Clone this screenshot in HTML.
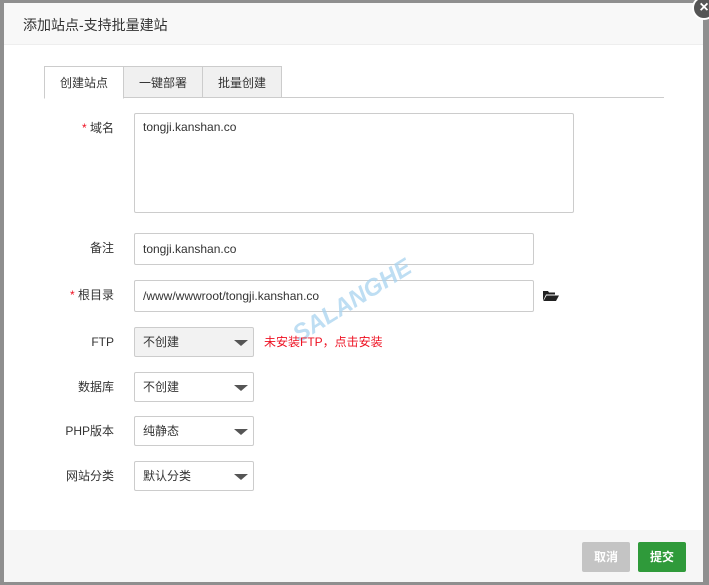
<!DOCTYPE html>
<html><head><meta charset="utf-8"><style>
*{box-sizing:border-box;margin:0;padding:0}
body{width:709px;height:585px;background:#8f8f8f;font-family:"Liberation Sans","Noto Sans CJK SC",sans-serif;position:relative;overflow:hidden;font-size:12px;color:#333}
.dlg{position:absolute;left:4px;top:3px;width:699px;height:579px;background:#fff}
.hd{height:42px;background:#f8f8f8;border-bottom:1px solid #eee;padding-left:19px;line-height:44px;font-size:14px;color:#333}
.close{position:absolute;left:688px;top:-7px;width:24px;height:24px;border-radius:50%;background:#555;border:2px solid #fff;color:#fff;font-size:16px;font-weight:bold;text-align:center;line-height:19px}
.tabs{position:absolute;left:40px;top:63px;width:620px;height:32px;border-bottom:1px solid #ccc}
.tab{position:absolute;top:0;height:32px;line-height:32px;text-align:center;font-size:12px;background:#f0f0f0;border:1px solid #ccc}
.tab.a{background:#fff;border-bottom:1px solid #fff;height:33px}
.lbl{position:absolute;width:110px;text-align:right;font-size:12px}
.red{color:#e12}
.in{position:absolute;border:1px solid #ccc;border-radius:2px;background:#fff;padding-left:8px;font-size:12px}
.sel{position:absolute;left:130px;width:120px;height:30px;border:1px solid #ccc;border-radius:2px;line-height:28px;padding-left:8px;background:#fff}
.sel:after{content:"";position:absolute;right:5px;top:12px;border-left:7px solid transparent;border-right:7px solid transparent;border-top:6px solid #555}
.ft{position:absolute;left:0;top:527px;width:699px;height:52px;background:#f6f6f6}
.btn{position:absolute;top:539px;height:30px;width:48px;color:#fff;font-weight:bold;text-align:center;line-height:30px;border-radius:2px;font-size:12px}
</style></head><body>
<div class="dlg">
<div class="hd">添加站点-支持批量建站</div>
<div class="tabs">
<div class="tab a" style="left:0;width:80px">创建站点</div>
<div class="tab" style="left:79px;width:80px">一键部署</div>
<div class="tab" style="left:158px;width:80px">批量创建</div>
</div>
<div class="lbl" style="top:116px"><span class="red">*</span> 域名</div>
<div class="in" style="left:130px;top:110px;width:440px;height:100px;padding-top:6px">tongji.kanshan.co</div>
<div class="lbl" style="top:236px">备注</div>
<div class="in" style="left:130px;top:230px;width:400px;height:32px;line-height:30px">tongji.kanshan.co</div>
<div class="lbl" style="top:283px"><span class="red">*</span> 根目录</div>
<div class="in" style="left:130px;top:277px;width:400px;height:32px;line-height:30px">/www/wwwroot/tongji.kanshan.co</div>
<svg style="position:absolute;left:539px;top:287px" width="16" height="12" viewBox="0 0 16 12"><path d="M0 1h5l1 1.5h6v2H3L0 11z" fill="#222"/><path d="M3.5 5.5H16L13 11H0.5z" fill="#222"/></svg>
<div style="position:absolute;left:284px;top:322px;transform:rotate(-32deg);transform-origin:left top;font-size:24px;font-weight:bold;font-style:italic;color:#a9d3ef;opacity:.75">SALANGHE</div>
<div class="lbl" style="top:332px">FTP</div>
<div class="sel" style="top:324px;background:#f2f2f2">不创建</div>
<div class="red" style="position:absolute;left:260px;top:330px">未安装FTP，点击安装</div>
<div class="lbl" style="top:375px">数据库</div>
<div class="sel" style="top:369px">不创建</div>
<div class="lbl" style="top:419px">PHP版本</div>
<div class="sel" style="top:413px">纯静态</div>
<div class="lbl" style="top:464px">网站分类</div>
<div class="sel" style="top:458px">默认分类</div>
<div class="ft"></div>
<div class="btn" style="left:578px;background:#c4c4c4">取消</div>
<div class="btn" style="left:634px;background:#2f9a3a">提交</div>
<div class="close">×</div>
</div>
</body></html>
